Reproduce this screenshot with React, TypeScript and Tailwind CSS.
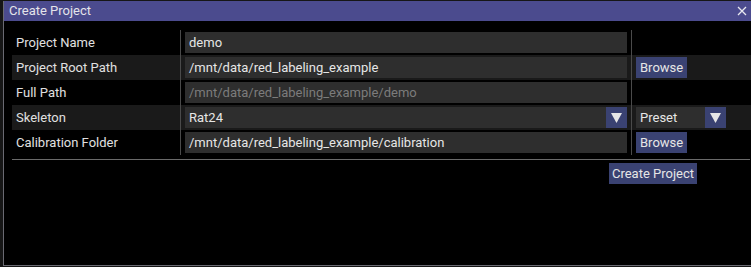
import React from 'react';

const font = { fontFamily: 'Roboto, "Liberation Sans", sans-serif' };

const Arrow = () => (
  <div className="w-[21px] h-[21px] bg-[#3a4272] flex items-center justify-center">
    <svg width="11" height="10" viewBox="0 0 11 10">
      <polygon points="0,0 11,0 5.5,10" fill="#e6e6e6" />
    </svg>
  </div>
);

const Button = ({ label }: { label: string }) => (
  <div className="h-[21px] px-[4px] bg-[#3a4272] text-[#e6e6e6] flex items-center leading-none">{label}</div>
);

const Input = ({ value, dim }: { value: string; dim?: boolean }) => (
  <div className={`h-[21px] w-[442px] bg-[#2e2e2e] flex items-center px-[4px] leading-none ${dim ? 'text-[#7c7c7c]' : 'text-[#e6e6e6]'}`}>
    {value}
  </div>
);

const rows = [
  { label: 'Project Name', kind: 'input', value: 'demo' },
  { label: 'Project Root Path', kind: 'input', value: '/mnt/data/red_labeling_example', extra: 'browse' },
  { label: 'Full Path', kind: 'dim', value: '/mnt/data/red_labeling_example/demo' },
  { label: 'Skeleton', kind: 'combo', value: 'Rat24', extra: 'preset' },
  { label: 'Calibration Folder', kind: 'input', value: '/mnt/data/red_labeling_example/calibration', extra: 'browse' },
];

export default function App() {
  return (
    <div className="w-[751px] h-[267px] bg-[#161616] pl-[3px] pt-[1px] overflow-hidden text-[13px]" style={font}>
      <div className="w-[748px] h-[265px] bg-black border-l border-b border-[#6a6a72] flex flex-col">
        <div className="h-[20px] bg-[#4b4b8e] flex items-center justify-between pl-[5px] pr-[4px] text-[#e4e4ea]">
          <span>Create Project</span>
          <svg width="10" height="10" viewBox="0 0 10 10">
            <path d="M1 1 L9 9 M9 1 L1 9" stroke="#e8e8f0" strokeWidth="1.3" />
          </svg>
        </div>
        <div className="pl-[8px] pt-[9px] flex flex-col">
          <div className="flex flex-col">
            {rows.map((r, i) => (
              <div key={r.label} className={`h-[25px] flex items-center ${i % 2 === 1 ? 'bg-[#1a1a1a]' : ''}`}>
                <div className="w-[168px] pl-[4px] text-[#e0e0e0]">{r.label}</div>
                <div className="w-px h-[25px] bg-[#4a4a4a]" />
                <div className="w-[450px] pl-[4px] flex items-center">
                  {r.kind === 'combo' ? (
                    <div className="w-[442px] h-[21px] bg-[#2e2e2e] flex items-center justify-between text-[#e6e6e6]">
                      <span className="pl-[4px]">{r.value}</span>
                      <Arrow />
                    </div>
                  ) : (
                    <Input value={r.value} dim={r.kind === 'dim'} />
                  )}
                </div>
                <div className="w-px h-[25px] bg-[#4a4a4a]" />
                <div className="pl-[4px] flex items-center">
                  {r.extra === 'browse' && <Button label="Browse" />}
                  {r.extra === 'preset' && (
                    <div className="w-[90px] h-[21px] bg-[#2e2e2e] flex items-center justify-between text-[#e6e6e6]">
                      <span className="pl-[4px]">Preset</span>
                      <Arrow />
                    </div>
                  )}
                </div>
              </div>
            ))}
          </div>
          <div className="h-px bg-[#6a6a6a] mt-[4px] mr-[1px]" />
          <div className="pl-[597px] pt-[3px]">
            <div className="w-[88px] h-[21px] bg-[#3a4272] text-[#e6e6e6] flex items-center justify-center leading-none">
              Create Project
            </div>
          </div>
        </div>
      </div>
    </div>
  );
}
